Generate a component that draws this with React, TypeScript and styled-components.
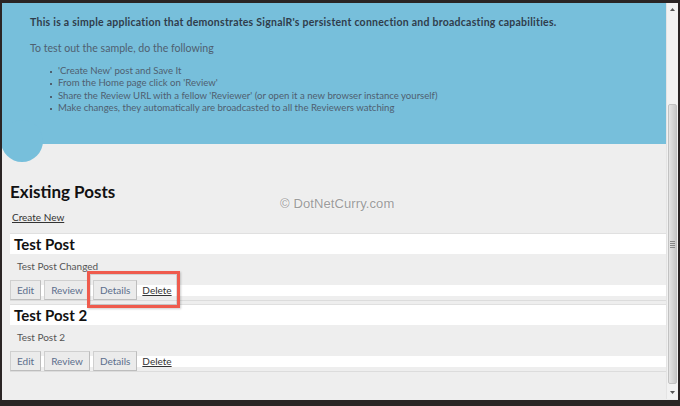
import styled, { createGlobalStyle } from "styled-components";

const GlobalStyle = createGlobalStyle`
  html, body {
    margin: 0;
    padding: 0;
    background: #2a2424;
  }
  * {
    box-sizing: border-box;
  }
`;

type Post = { id: number; title: string; body: string; highlight?: boolean };

const posts: Post[] = [
  { id: 1, title: "Test Post", body: "Test Post Changed", highlight: true },
  { id: 2, title: "Test Post 2", body: "Test Post 2" },
];

const steps = [
  "'Create New' post and Save It",
  "From the Home page click on 'Review'",
  "Share the Review URL with a fellow 'Reviewer' (or open it a new browser instance yourself)",
  "Make changes, they automatically are broadcasted to all the Reviewers watching",
];

const App: React.FC = () => {
  return (
    <>
      <GlobalStyle />
      <Window>
        <Viewport>
          <Page>
            <Banner>
              <Lead>
                This is a simple application that demonstrates SignalR's persistent
                connection and broadcasting capabilities.
              </Lead>
              <Intro>To test out the sample, do the following</Intro>
              <Steps>
                {steps.map((s) => (
                  <li key={s}>{s}</li>
                ))}
              </Steps>
              <Bubble />
            </Banner>
            <Content>
              <Watermark>© DotNetCurry.com</Watermark>
              <Heading>Existing Posts</Heading>
              <CreateLink href="#">Create New</CreateLink>
              <PostList>
                {posts.map((p) => (
                  <PostCard key={p.id}>
                    <PostTitle>{p.title}</PostTitle>
                    <PostBody>{p.body}</PostBody>
                    <Actions>
                      <ActionButton type="button">Edit</ActionButton>
                      <ActionButton type="button">Review</ActionButton>
                      <ActionButton type="button">Details</ActionButton>
                      <DeleteLink href="#">Delete</DeleteLink>
                    </Actions>
                    {p.highlight && <Callout />}
                  </PostCard>
                ))}
              </PostList>
            </Content>
          </Page>
          <Scrollbar>
            <Arrow>
              <svg width="5" height="3" viewBox="0 0 5 3">
                <path d="M0 3 L2.5 0 L5 3 Z" fill="#555" />
              </svg>
            </Arrow>
            <Track>
              <Thumb>
                <Grip />
              </Thumb>
            </Track>
            <Arrow>
              <svg width="5" height="3" viewBox="0 0 5 3">
                <path d="M0 0 L2.5 3 L5 0 Z" fill="#555" />
              </svg>
            </Arrow>
          </Scrollbar>
        </Viewport>
      </Window>
    </>
  );
};

const Window = styled.div`
  width: 680px;
  height: 406px;
  border-style: solid;
  border-color: #2a2424;
  border-width: 3px 2px 6px 2px;
  background: #eeeeee;
  overflow: hidden;
`;

const Viewport = styled.div`
  display: flex;
  height: 100%;
`;

const Page = styled.div`
  flex: 1;
  display: flex;
  flex-direction: column;
  background: #eeeeee;
  overflow: hidden;
  font-family: Lato, "Noto Sans", sans-serif;
`;

const Banner = styled.div`
  position: relative;
  height: 141px;
  flex-shrink: 0;
  background: #77bfdb;
  padding: 12px 0 0 28px;
`;

const Lead = styled.p`
  margin: 0;
  font-size: 10.5px;
  font-weight: 700;
  letter-spacing: 0.25px;
  color: #2f3d4c;
  line-height: 15px;
`;

const Intro = styled.p`
  margin: 10px 0 0;
  font-size: 10.6px;
  color: #4f6070;
  line-height: 16px;
`;

const Steps = styled.ul`
  margin: 9px 0 0;
  padding: 0 0 0 28px;
  font-size: 9.6px;
  line-height: 12.4px;
  color: #4f6070;
  list-style: none;

  li {
    position: relative;
  }

  li::before {
    content: "";
    position: absolute;
    left: -8px;
    top: 6px;
    width: 2px;
    height: 2px;
    background: #4f6070;
  }
`;

const Bubble = styled.div`
  position: absolute;
  left: -1px;
  top: 117px;
  width: 42px;
  height: 42px;
  border-radius: 50%;
  background: #77bfdb;
`;

const Content = styled.div`
  position: relative;
  flex: 1;
  padding: 37px 0 0 8px;
  display: flex;
  flex-direction: column;
  align-items: flex-start;
`;

const Watermark = styled.div`
  position: absolute;
  left: 278px;
  top: 52px;
  font-family: "Liberation Sans", Arial, sans-serif;
  font-size: 13px;
  letter-spacing: 0.1px;
  color: #9c9c9c;
  text-shadow: 0 0 2px #fff;
`;

const Heading = styled.h2`
  margin: 0;
  font-size: 17px;
  font-weight: 700;
  color: #111;
  line-height: 22px;
`;

const CreateLink = styled.a`
  margin: 7px 0 0 2px;
  font-size: 10px;
  color: #333;
  line-height: 14px;
`;

const PostList = styled.div`
  align-self: stretch;
  margin-top: 9px;
  display: flex;
  flex-direction: column;
  gap: 3px;
`;

const PostCard = styled.div`
  position: relative;
  border-bottom: 1px solid #dcdcdc;
`;

const PostTitle = styled.h3`
  margin: 0;
  height: 21px;
  padding: 0 0 0 4px;
  border-top: 1px solid #e0e0e0;
  background: #fff;
  font-size: 15px;
  font-weight: 700;
  line-height: 20px;
  color: #111;
`;

const PostBody = styled.p`
  margin: 0;
  height: 26px;
  padding: 5px 0 0 7px;
  font-size: 10px;
  line-height: 14px;
  color: #555;
`;

const Actions = styled.div`
  display: flex;
  align-items: center;
  gap: 3px;
  height: 20px;
  background: linear-gradient(
    to bottom,
    transparent 5px,
    #fff 5px,
    #fff 16px,
    transparent 16px
  );
`;

const ActionButton = styled.button`
  height: 20px;
  padding: 0 6px;
  border: 1px solid #cfcfcf;
  border-bottom-color: #bdbdbd;
  border-right-color: #bdbdbd;
  background: #ebebeb;
  font-family: inherit;
  font-size: 10px;
  color: #5b6e8c;
`;

const DeleteLink = styled.a`
  margin-left: 2px;
  font-size: 10px;
  color: #333;
  text-decoration: underline;
`;

const Callout = styled.div`
  position: absolute;
  z-index: 2;
  left: 77px;
  top: 38px;
  width: 93px;
  height: 37px;
  border: 3px solid #ef5b4d;
  box-shadow: inset 0 0 0 1px rgba(0, 0, 0, 0.12), 1px 1px 2px rgba(0, 0, 0, 0.2);
  pointer-events: none;
`;

const Scrollbar = styled.div`
  width: 12px;
  flex-shrink: 0;
  display: flex;
  flex-direction: column;
  background: #f2f2f2;
  border-left: 1px solid #e4e4e4;
  height: 396px;
`;

const Arrow = styled.div`
  height: 13px;
  display: flex;
  align-items: center;
  justify-content: center;
`;

const Track = styled.div`
  flex: 1;
  padding: 88px 1px 2px;
  display: flex;
`;

const Thumb = styled.div`
  flex: 1;
  border: 1px solid #c2c2c2;
  border-radius: 2px;
  background: linear-gradient(to right, #e6e6e6, #d4d4d4 60%, #c9c9c9);
  display: flex;
  align-items: center;
  justify-content: center;
`;

const Grip = styled.div`
  width: 5px;
  height: 7px;
  background: repeating-linear-gradient(
    to bottom,
    #888 0 1px,
    transparent 1px 2px
  );
`;

export default App;
